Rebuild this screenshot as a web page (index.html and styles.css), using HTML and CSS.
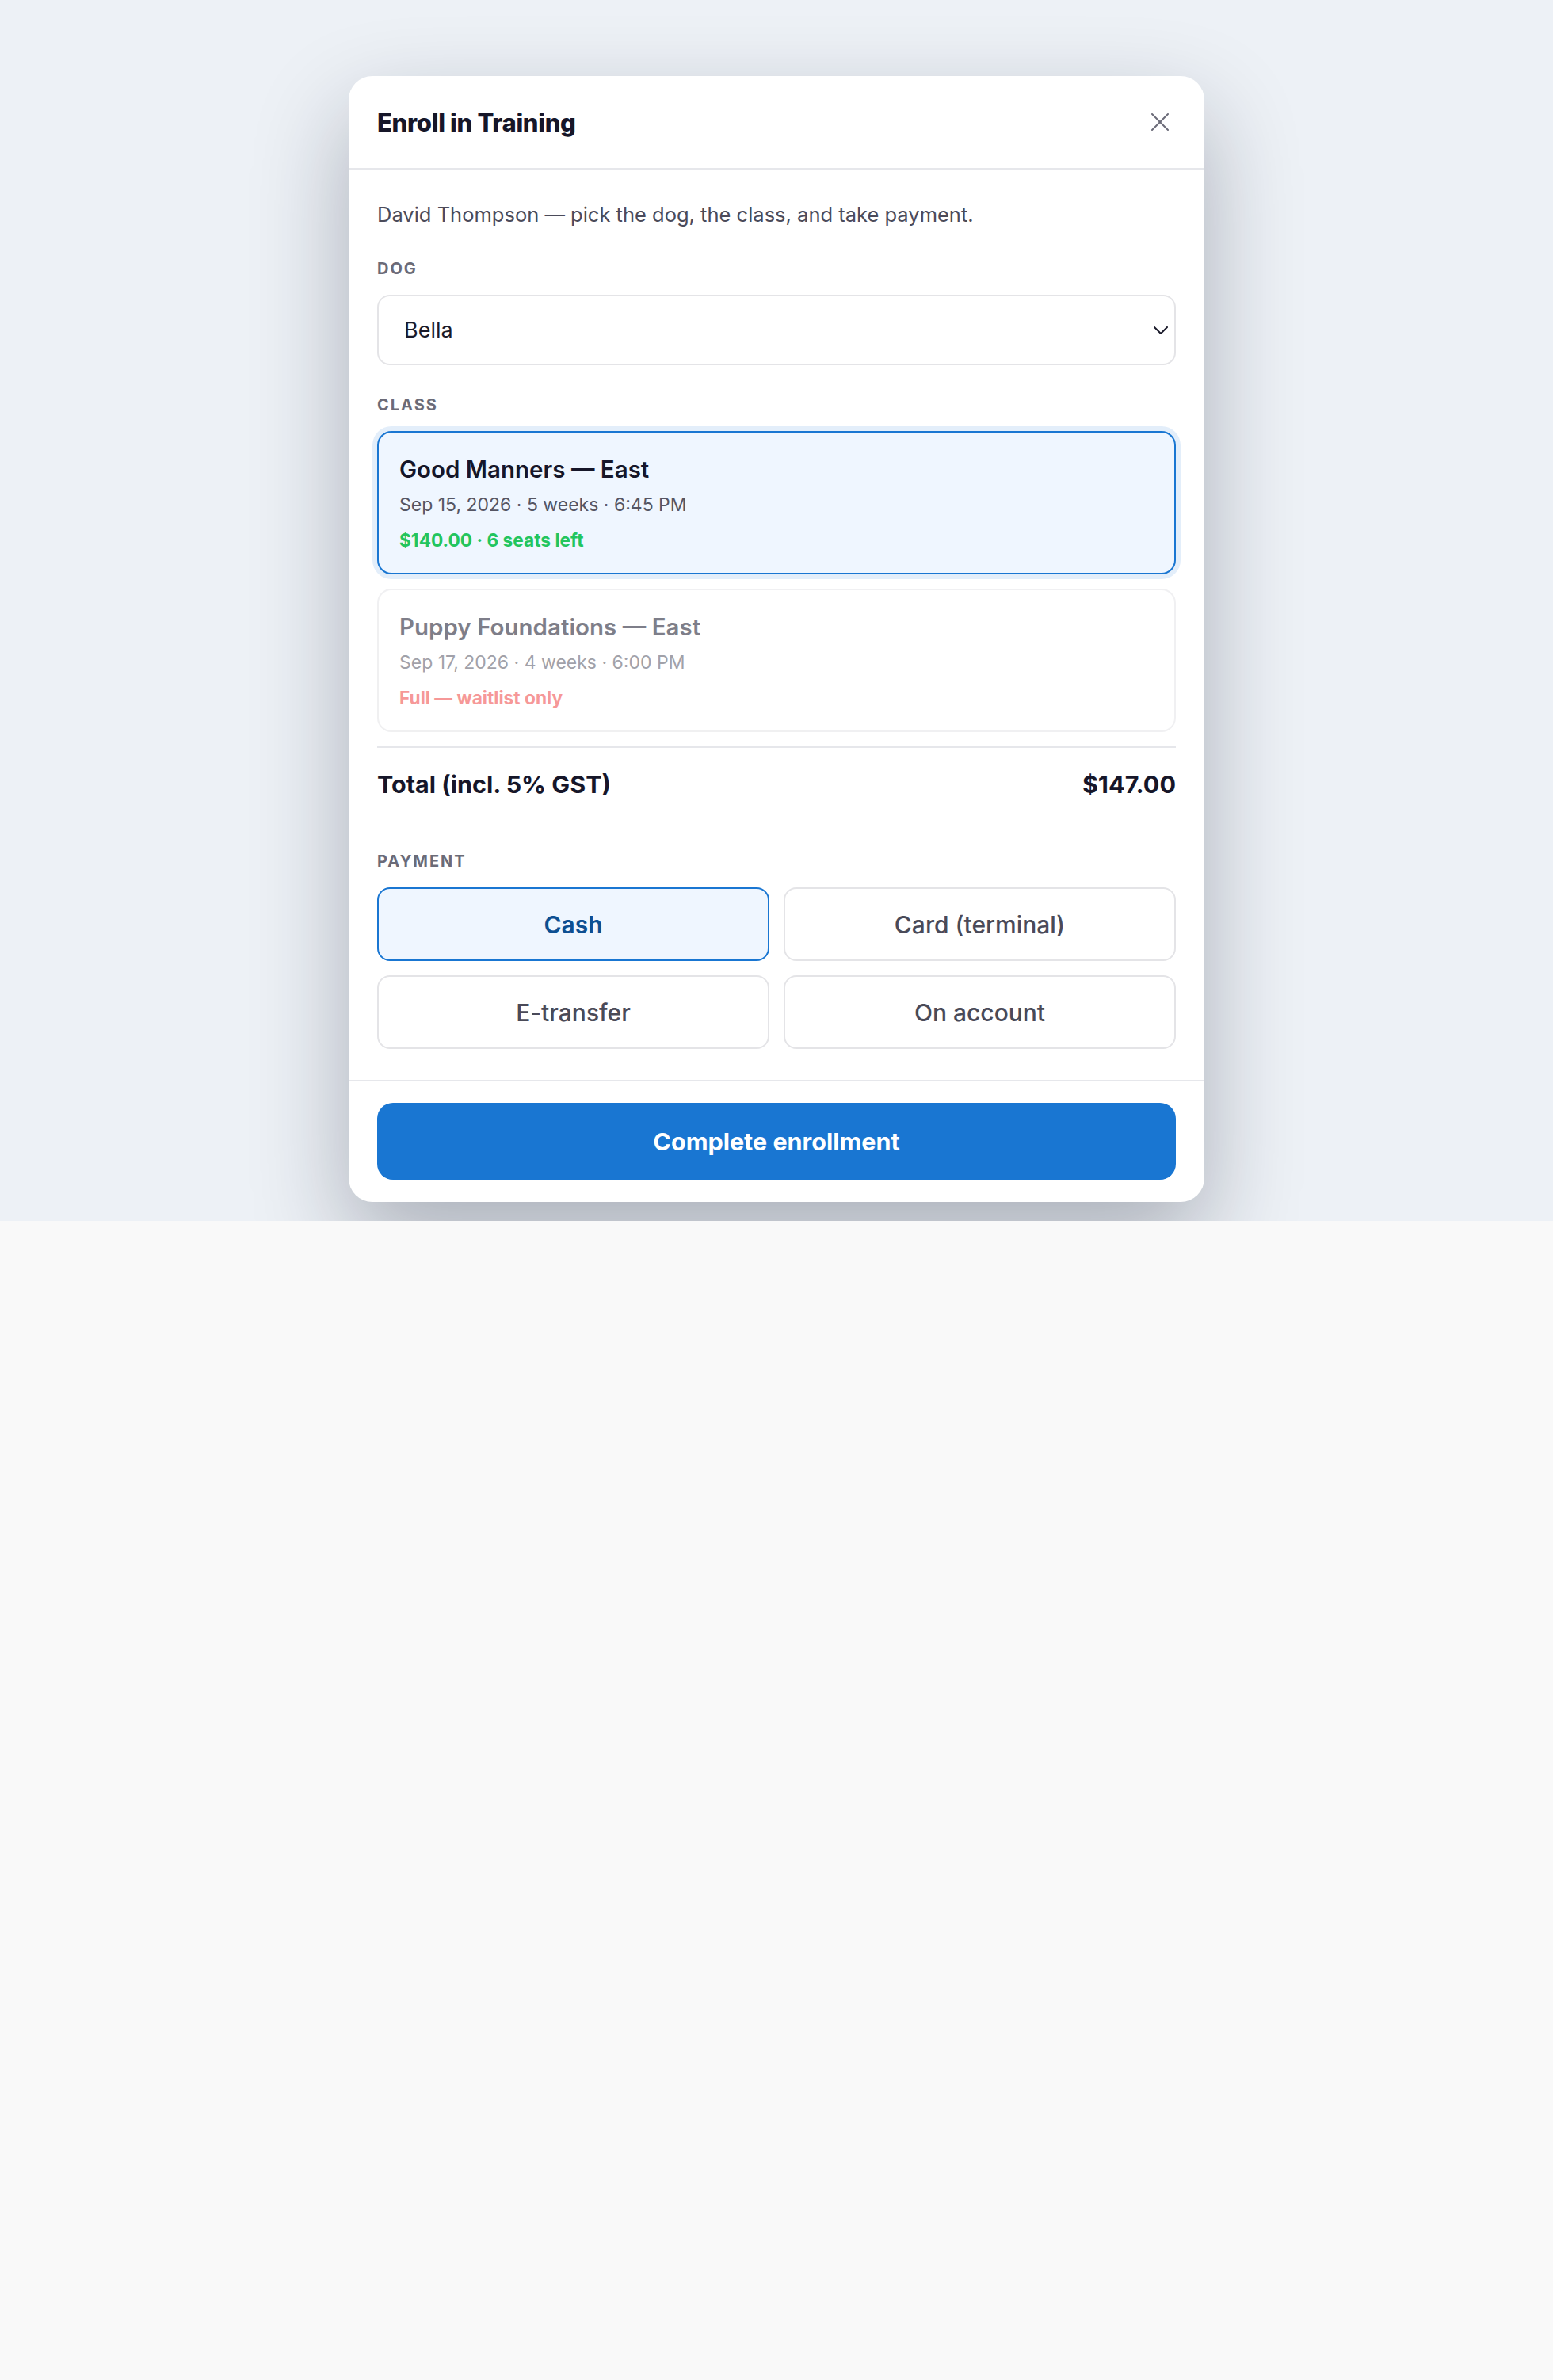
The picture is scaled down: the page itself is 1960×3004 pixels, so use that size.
FILE: index.html
```html
<!DOCTYPE html>
<html lang="en">
<head>
    <meta charset="UTF-8">
    <meta name="viewport" content="width=device-width, initial-scale=1.0">
    <title>Enroll in Training</title>
    <link rel="stylesheet" href="styles.css">
</head>
<body>

<div class="backdrop">
    <div class="modal">
        <header class="modal-header">
            <h2>Enroll in Training</h2>
            <button class="close" type="button" aria-label="Close">
                <svg width="22" height="22" viewBox="0 0 22 22" fill="none" stroke="currentColor" stroke-width="2" stroke-linecap="round">
                    <path d="M1 1 21 21M21 1 1 21"/>
                </svg>
            </button>
        </header>

        <div class="modal-body">
            <p class="intro">David Thompson — pick the dog, the class, and take payment.</p>

            <div class="field">
                <label class="field-label">Dog</label>
                <div class="select">
                    <span>Bella</span>
                    <svg width="18" height="10" viewBox="0 0 18 10" fill="none" stroke="currentColor" stroke-width="2" stroke-linecap="round" stroke-linejoin="round">
                        <path d="M1 1 9 9 17 1"/>
                    </svg>
                </div>
            </div>

            <div class="field">
                <label class="field-label">Class</label>
                <div class="class-list">
                    <div class="class-card selected">
                        <div class="class-name">Good Manners — East</div>
                        <div class="class-meta">Sep 15, 2026 · 5 weeks · 6:45 PM</div>
                        <div class="class-status open">$140.00 · 6 seats left</div>
                    </div>
                    <div class="class-card full">
                        <div class="class-name">Puppy Foundations — East</div>
                        <div class="class-meta">Sep 17, 2026 · 4 weeks · 6:00 PM</div>
                        <div class="class-status waitlist">Full — waitlist only</div>
                    </div>
                </div>
            </div>

            <div class="total">
                <span>Total (incl. 5% GST)</span>
                <span>$147.00</span>
            </div>

            <div class="field">
                <label class="field-label">Payment</label>
                <div class="pay-grid">
                    <button class="pay-option active" type="button">Cash</button>
                    <button class="pay-option" type="button">Card (terminal)</button>
                    <button class="pay-option" type="button">E-transfer</button>
                    <button class="pay-option" type="button">On account</button>
                </div>
            </div>
        </div>

        <footer class="modal-footer">
            <button class="primary" type="button">Complete enrollment</button>
        </footer>
    </div>
</div>

</body>
</html>
```

FILE: styles.css
```css
* {
    margin: 0;
    padding: 0;
    box-sizing: border-box;
}

body {
    font-family: Inter, "Noto Sans", sans-serif;
    background: #f9f9f9;
    color: #161629;
}

.backdrop {
    background: #edf1f6;
    padding: 96px 0 24px;
    display: flex;
    justify-content: center;
}

.modal {
    width: 1080px;
    background: #fff;
    border-radius: 30px;
    box-shadow: 0 50px 120px rgba(15, 23, 42, 0.3);
    position: relative;
    z-index: 1;
}

/* header */
.modal-header {
    height: 118px;
    padding: 0 36px;
    border-bottom: 2px solid #e6e7eb;
    display: flex;
    align-items: center;
    justify-content: space-between;
}

.modal-header h2 {
    font-size: 31px;
    font-weight: 800;
    letter-spacing: -0.01em;
    color: #161629;
}

.close {
    width: 40px;
    height: 40px;
    border: none;
    background: none;
    color: #6b6b78;
    display: flex;
    align-items: center;
    justify-content: center;
    cursor: pointer;
}

/* body */
.modal-body {
    padding: 39px 36px 39px;
}

.intro {
    font-size: 25.5px;
    line-height: 36px;
    color: #4b4b5a;
}

.field {
    margin-top: 38px;
}

.field-label {
    display: block;
    font-size: 20px;
    line-height: 24px;
    font-weight: 700;
    letter-spacing: 0.1em;
    text-transform: uppercase;
    color: #6b6b78;
    margin-bottom: 21px;
}

.select {
    height: 89px;
    border: 2px solid #e4e4e7;
    border-radius: 16px;
    padding: 0 8px 0 32px;
    display: flex;
    align-items: center;
    justify-content: space-between;
    font-size: 27px;
    color: #1a1a2a;
}

.class-list {
    display: flex;
    flex-direction: column;
    gap: 18px;
}

.class-card {
    border: 2px solid #e4e4e7;
    border-radius: 18px;
    padding: 28px 26px 27px;
}

.class-card.selected {
    border-color: #1976d2;
    background: #eff6ff;
    box-shadow: 0 0 0 6px rgba(25, 118, 210, 0.12);
}

.class-card.full {
    opacity: 0.55;
}

.class-name {
    font-size: 29.5px;
    line-height: 36px;
    font-weight: 600;
    color: #161629;
}

.class-meta {
    margin-top: 12px;
    font-size: 23px;
    line-height: 30px;
    color: #555563;
}

.class-status {
    margin-top: 16px;
    font-size: 22.7px;
    line-height: 28px;
    font-weight: 700;
}

.class-status.open {
    color: #22c55e;
}

.class-status.waitlist {
    color: #ef4444;
}

.total {
    margin-top: 18px;
    border-top: 2px solid #e6e7eb;
    padding-top: 28px;
    display: flex;
    justify-content: space-between;
    font-size: 30.5px;
    line-height: 36px;
    font-weight: 700;
    color: #161629;
}

.total + .field {
    margin-top: 67px;
}

.pay-grid {
    display: grid;
    grid-template-columns: 1fr 1fr;
    gap: 18px;
}

.pay-option {
    height: 93px;
    border: 2px solid #e4e4e7;
    border-radius: 16px;
    background: #fff;
    font-family: inherit;
    font-size: 30px;
    font-weight: 500;
    color: #4a4a58;
    cursor: pointer;
}

.pay-option.active {
    border-color: #1976d2;
    background: #eff6ff;
    color: #0d4f92;
    font-weight: 600;
}

/* footer */
.modal-footer {
    border-top: 2px solid #e6e7eb;
    padding: 27px 36px 28px;
}

.primary {
    width: 100%;
    height: 97px;
    border: none;
    border-radius: 20px;
    background: #1976d2;
    color: #fff;
    font-family: inherit;
    font-size: 30.5px;
    font-weight: 700;
    cursor: pointer;
}
```
